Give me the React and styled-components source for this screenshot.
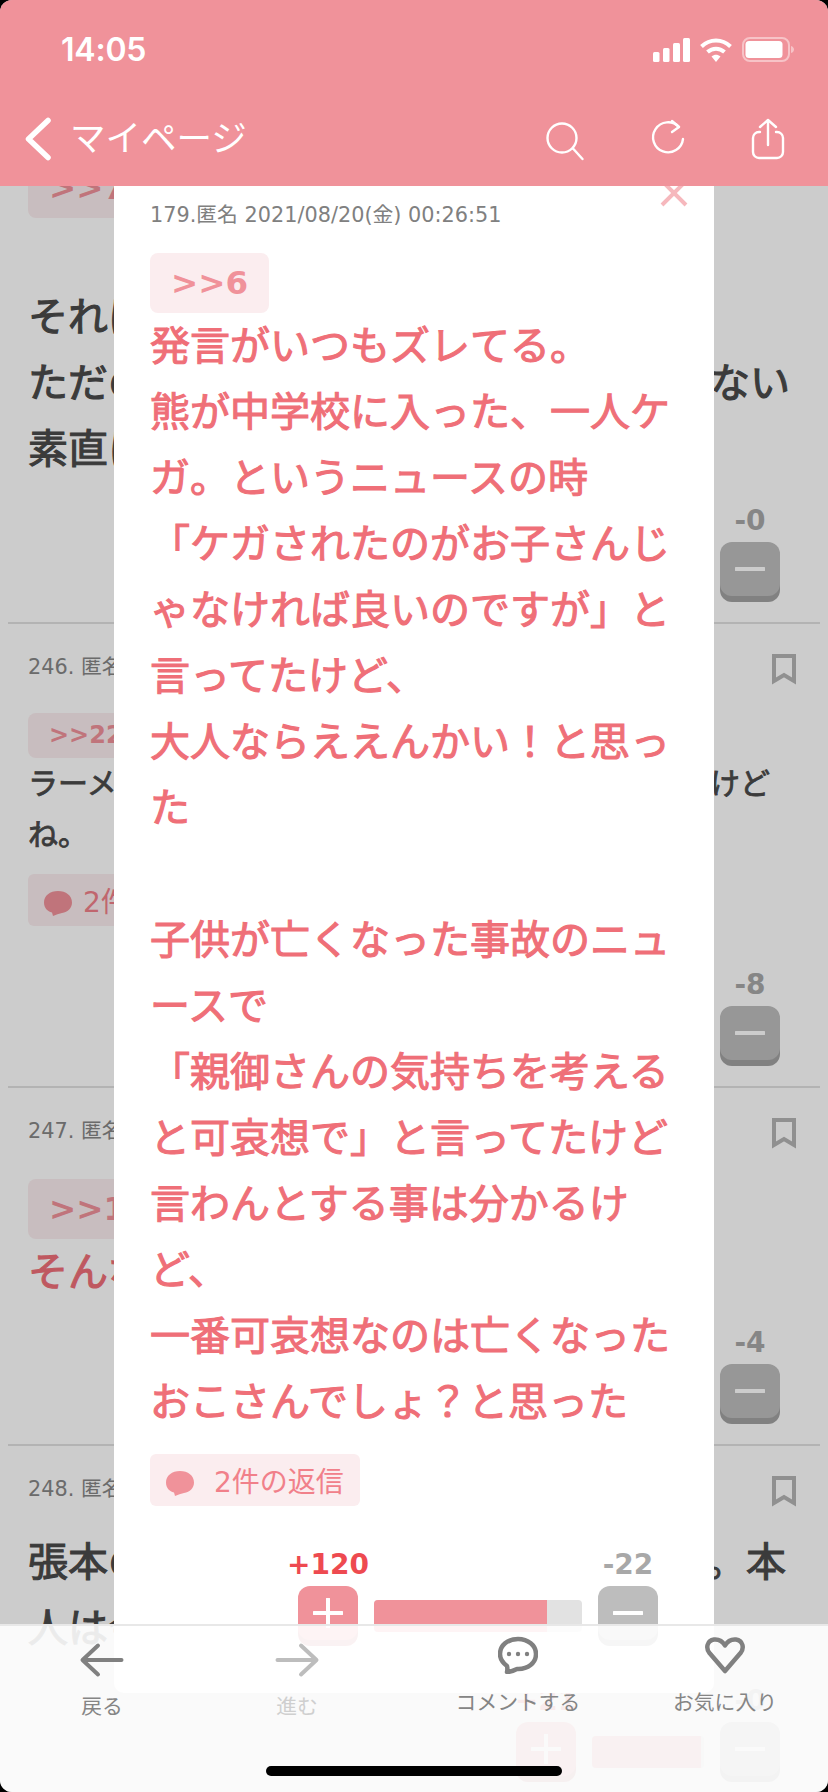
import React from "react";
import styled, { createGlobalStyle } from "styled-components";

const FONT = `"DejaVu Sans", "Noto Sans CJK JP", sans-serif`;
const PINK = "#f0929a";
const BODY_PINK = "#ef6f78";

const Global = createGlobalStyle`
  html, body { margin: 0; padding: 0; background: #000; }
  #root { width: 828px; height: 1792px; }
`;

const Frame = styled.div`
  position: relative;
  width: 828px;
  height: 1792px;
  overflow: hidden;
  border-radius: 12px;
  background: #fff;
  display: flex;
  flex-direction: column;
  font-family: ${FONT};
`;

const Header = styled.header`
  position: relative;
  z-index: 3;
  flex: none;
  height: 186px;
  background: ${PINK};
  color: #fff;
  display: flex;
  flex-direction: column;
`;

const StatusBar = styled.div`
  height: 92px;
  padding: 7px 34px 0 61px;
  box-sizing: border-box;
  display: flex;
  align-items: center;
  justify-content: space-between;
`;

const Time = styled.span`
  font-family: Inter, sans-serif;
  font-weight: 600;
  font-size: 32px;
  letter-spacing: -0.2px;
`;

const StatusIcons = styled.svg`
  display: block;
  width: 141px;
  height: 26px;
`;

const NavBar = styled.nav`
  height: 94px;
  display: flex;
  align-items: center;
  padding: 0 40px 0 24px;
`;

const BackLink = styled.div`
  display: flex;
  align-items: center;
  gap: 16px;
  flex: 1;
  font-size: 35.5px;
  line-height: 44px;
  font-weight: 400;
`;

const NavIcons = styled.div`
  display: flex;
  gap: 61px;
`;

const NavIcon = styled.svg`
  display: block;
  width: 40px;
  height: 44px;
  fill: none;
  stroke: #fff;
  stroke-width: 2.4;
  stroke-linecap: round;
  stroke-linejoin: round;
`;

const BackChevron = styled(NavIcon)`
  width: 30px;
  stroke-width: 5.5;
`;

const List = styled.main`
  flex: 1;
  min-height: 0;
  overflow: hidden;
  color: #4a4a4a;
`;

const Row = styled.article`
  margin: ${(p) => (p.$first ? "-28px" : "0")} 8px 0;
  padding: ${(p) => (p.$first ? "0" : "29px")} 24px 20px 20px;
  border-top: ${(p) => (p.$first ? "none" : "2px solid #e0e0e0")};
`;

const RowHead = styled.div`
  display: flex;
  justify-content: space-between;
  height: 32px;
  margin-bottom: ${(p) => p.$gap}px;
`;

const Meta = styled.div`
  font-size: 20.8px;
  line-height: 28px;
  color: #868686;
  white-space: nowrap;
`;

const Bookmark = styled.svg`
  display: block;
  width: 24px;
  height: 32px;
  fill: none;
  stroke: #b4b4b4;
  stroke-width: 4;
`;

const Tag = styled.div`
  width: fit-content;
  box-sizing: border-box;
  height: ${(p) => (p.$small ? 45 : 60)}px;
  line-height: ${(p) => (p.$small ? 45 : 61)}px;
  padding: 0 21px;
  border-radius: 8px;
  background: #fbedef;
  color: ${PINK};
  font-weight: 700;
  font-size: ${(p) => (p.$small ? 24 : 32.5)}px;
  white-space: nowrap;
`;

const TextLine = styled.div`
  display: flex;
  justify-content: space-between;
  box-sizing: border-box;
  min-height: ${(p) => (p.$small ? 51 : 66)}px;
  padding-right: ${(p) => p.$right || 0}px;
  font-size: ${(p) => (p.$small ? 30 : 40)}px;
  line-height: ${(p) => (p.$small ? 51 : 66)}px;
  font-weight: 400;
  -webkit-text-stroke: ${(p) => (p.$small ? 0.8 : 1.1)}px currentColor;
  white-space: nowrap;
  color: ${(p) => p.$color || "inherit"};
`;

const ReplyChip = styled.div`
  display: flex;
  align-items: center;
  gap: ${(p) => p.$gap}px;
  width: 210px;
  height: 52px;
  box-sizing: border-box;
  padding: 5px 0 0 16px;
  margin-top: ${(p) => p.$top}px;
  border-radius: 6px;
  background: #fbedef;
  color: #f1808a;
  font-size: 28px;
  line-height: 47px;
  white-space: nowrap;
`;

const ReplyBubble = styled.svg`
  display: block;
  flex: none;
  width: 28px;
  height: 26px;
  fill: ${PINK};
`;

const VoteGrid = styled.div`
  display: grid;
  width: fit-content;
  grid-template-columns: 60px ${(p) => p.$bar}px 60px;
  column-gap: 16px;
  row-gap: 3px;
  margin: ${(p) => p.$top}px ${(p) => p.$right}px 0 auto;
`;

const VoteCount = styled.div`
  grid-row: 1;
  grid-column: ${(p) => (p.$up ? 1 : 3)};
  justify-self: center;
  font-size: 28px;
  height: 40px;
  line-height: 44px;
  font-weight: 700;
  white-space: nowrap;
  color: ${(p) => (p.$up ? "#ee4a50" : "#a8a8a8")};
`;

const VoteButton = styled.div`
  grid-row: 2;
  width: 60px;
  height: 60px;
  box-sizing: border-box;
  padding-bottom: 6px;
  border-radius: 12px;
  display: flex;
  align-items: center;
  justify-content: center;
  background: ${(p) => (p.$up ? PINK : "#bdbdbd")};
  box-shadow: inset 0 -6px 0 rgba(0, 0, 0, 0.14);
`;

const VoteGlyph = styled.svg`
  display: block;
  width: 30px;
  height: 30px;
  stroke: #fff;
  stroke-width: 4;
  stroke-linecap: round;
`;

const VoteTrack = styled.div`
  grid-row: 2;
  height: 32px;
  margin-top: 14px;
  border-radius: 4px;
  overflow: hidden;
  background: #e2e2e2;
`;

const VoteFill = styled.div`
  height: 100%;
  background: ${PINK};
`;

const Dim = styled.div`
  position: absolute;
  inset: 0;
  z-index: 1;
  background: rgba(0, 0, 0, 0.2);
`;

const Modal = styled.section`
  position: absolute;
  z-index: 2;
  top: 186px;
  left: 114px;
  width: 600px;
  height: 1507px;
  box-sizing: border-box;
  padding: 15px 36px 0;
  overflow: hidden;
  border-radius: 0 0 10px 10px;
  background: #fff;
`;

const CloseIcon = styled.svg`
  position: absolute;
  top: -7px;
  right: 26px;
  width: 28px;
  height: 28px;
  stroke: #f6b8bd;
  stroke-width: 4;
`;

const ModalMeta = styled(Meta)`
  margin-bottom: 24px;
  color: #808080;
`;

const BottomBar = styled.footer`
  position: absolute;
  z-index: 4;
  left: 0;
  right: 0;
  bottom: 0;
  height: 168px;
  box-sizing: border-box;
  border-top: 2px solid #e8e8e8;
  background: rgba(255, 255, 255, 0.9);
  display: grid;
  grid-template-columns: 204px 186px 256px 158px;
`;

const BarItem = styled.div`
  display: flex;
  flex-direction: column;
  align-items: center;
  padding-top: ${(p) => (p.$raised ? 10 : 18)}px;
  gap: ${(p) => (p.$raised ? 15 : 17)}px;
  font-size: 20.8px;
  line-height: 28px;
  white-space: nowrap;
  color: ${(p) => (p.$muted ? "#cfcfcf" : "#858585")};
`;

const BarArrow = styled.svg`
  display: block;
  width: 44px;
  height: 32px;
  overflow: visible;
  fill: none;
  stroke: ${(p) => (p.$muted ? "#bdbdbd" : "#808080")};
  stroke-width: 4;
  stroke-linecap: round;
  stroke-linejoin: round;
`;

const BarGlyph = styled.svg`
  display: block;
  width: 40px;
  height: 38px;
  fill: none;
  stroke: #808080;
  stroke-width: 4.5;
  stroke-linejoin: round;
`;

const HomeIndicator = styled.div`
  position: absolute;
  z-index: 5;
  left: 266px;
  bottom: 16px;
  width: 296px;
  height: 10px;
  border-radius: 5px;
  background: #000;
`;

function Vote({ plus, minus, pct, bar, top, right }) {
  return (
    <VoteGrid $bar={bar} $top={top} $right={right}>
      <VoteCount $up>{plus}</VoteCount>
      <VoteCount>{minus}</VoteCount>
      <VoteButton $up>
        <VoteGlyph viewBox="0 0 30 30">
          <path d="M1 15H29M15 1V29" />
        </VoteGlyph>
      </VoteButton>
      <VoteTrack>
        <VoteFill style={{ width: `${pct}%` }} />
      </VoteTrack>
      <VoteButton>
        <VoteGlyph viewBox="0 0 30 30">
          <path d="M1 15H29" />
        </VoteGlyph>
      </VoteButton>
    </VoteGrid>
  );
}

function BookmarkIcon() {
  return (
    <Bookmark viewBox="0 0 24 32">
      <path d="M2 3H22V28L12 22L2 28Z" />
    </Bookmark>
  );
}

function Bubble() {
  return (
    <ReplyBubble viewBox="0 0 28 26">
      <path d="M14 1C6 1 0 5.5 0 12.5C0 18 3.5 21.5 8 22.5L9 26C12 24.5 15 23.5 18 23C24 22 28 18 28 12.5C28 5.5 22 1 14 1Z" />
    </ReplyBubble>
  );
}

const modalLines = [
  "発言がいつもズレてる。",
  "熊が中学校に入った、一人ケ",
  "ガ。というニュースの時",
  "「ケガされたのがお子さんじ",
  "ゃなければ良いのですが」と",
  "言ってたけど、",
  "大人ならええんかい！と思っ",
  "た",
  "",
  "子供が亡くなった事故のニュ",
  "ースで",
  "「親御さんの気持ちを考える",
  "と可哀想で」と言ってたけど",
  "言わんとする事は分かるけ",
  "ど、",
  "一番可哀想なのは亡くなった",
  "おこさんでしょ？と思った",
];

export default function App() {
  return (
    <Frame lang="ja">
      <Global />
      <Header>
        <StatusBar>
          <Time>14:05</Time>
          <StatusIcons viewBox="0 0 141 26">
            <g fill="#fff">
              <rect x="0" y="15" width="6.5" height="10" rx="1.5" />
              <rect x="10" y="11" width="6.5" height="14" rx="1.5" />
              <rect x="20" y="6" width="7" height="19" rx="1.5" />
              <rect x="30" y="1" width="7" height="24" rx="1.5" />
            </g>
            <g fill="none" stroke="#fff" strokeWidth="4">
              <path d="M48.5 9.5C57 1.5 69 1.5 77.5 9.5" />
              <path d="M54.5 15C59.5 10.5 66.5 10.5 71.5 15" />
            </g>
            <path d="M58.5 19.5C61.5 17 64.5 17 67.5 19.5L63 25Z" fill="#fff" />
            <rect x="90" y="1" width="46" height="23" rx="7" fill="none" stroke="#fff" strokeOpacity="0.45" strokeWidth="2" />
            <rect x="92.5" y="4" width="37" height="17" rx="3.5" fill="#fff" />
            <path d="M138 9C140 9.5 141 11 141 12.5C141 14 140 15.5 138 16Z" fill="#fff" fillOpacity="0.45" />
          </StatusIcons>
        </StatusBar>
        <NavBar>
          <BackLink>
            <BackChevron viewBox="0 0 30 44">
              <path d="M24 3.5L4.5 22L24 40.5" />
            </BackChevron>
            マイページ
          </BackLink>
          <NavIcons>
            <NavIcon viewBox="0 0 40 44">
              <circle cx="16" cy="21" r="14.5" />
              <path d="M27 31.5L36.5 42" />
            </NavIcon>
            <NavIcon viewBox="0 0 40 44">
              <path d="M36 22A15 15 0 1 1 32 10" />
              <path d="M25 4L32 10L25 15" />
            </NavIcon>
            <NavIcon viewBox="0 0 40 44">
              <path d="M12 15H11A6 6 0 0 0 5 21V35A6 6 0 0 0 11 41H29A6 6 0 0 0 35 35V21A6 6 0 0 0 29 15H28" />
              <path d="M20 28V3M12 10L20 3L28 10" />
            </NavIcon>
          </NavIcons>
        </NavBar>
      </Header>

      <List>
        <Row $first>
          <Tag>&gt;&gt;7</Tag>
          <TextLine />
          <TextLine>それは</TextLine>
          <TextLine $right={6}>
            <span>ただの</span>
            <span>ない</span>
          </TextLine>
          <TextLine>素直に</TextLine>
          <Vote plus="+5" minus="-0" pct={100} bar={112} top={17} right={16} />
        </Row>
        <Row>
          <RowHead $gap={28}>
            <Meta>246. 匿名</Meta>
            <BookmarkIcon />
          </RowHead>
          <Tag $small>&gt;&gt;22</Tag>
          <TextLine $small $right={26}>
            <span>ラーメ</span>
            <span>けど</span>
          </TextLine>
          <TextLine $small>ね。</TextLine>
          <ReplyChip $gap={11} $top={14}>
            <Bubble />
            2件の返信
          </ReplyChip>
          <Vote plus="+30" minus="-8" pct={79} bar={112} top={37} right={16} />
        </Row>
        <Row>
          <RowHead $gap={30}>
            <Meta>247. 匿名</Meta>
            <BookmarkIcon />
          </RowHead>
          <Tag>&gt;&gt;1</Tag>
          <TextLine $color={BODY_PINK}>そんな</TextLine>
          <Vote plus="+12" minus="-4" pct={75} bar={112} top={16} right={16} />
        </Row>
        <Row>
          <RowHead $gap={22}>
            <Meta>248. 匿名</Meta>
            <BookmarkIcon />
          </RowHead>
          <TextLine $right={10}>
            <span>張本の</span>
            <span>。本</span>
          </TextLine>
          <TextLine>人は今</TextLine>
          <Vote plus="+21" minus="-0" pct={97} bar={112} top={18} right={16} />
        </Row>
      </List>

      <Dim />

      <Modal>
        <CloseIcon viewBox="0 0 28 28">
          <path d="M2 2L26 26M26 2L2 26" />
        </CloseIcon>
        <ModalMeta>179.匿名 2021/08/20(金) 00:26:51</ModalMeta>
        <Tag>&gt;&gt;6</Tag>
        {modalLines.map((line, i) => (
          <TextLine key={i} $color={BODY_PINK}>
            {line}
          </TextLine>
        ))}
        <ReplyChip $gap={20} $top={19}>
          <Bubble />
          2件の返信
        </ReplyChip>
        <Vote plus="+120" minus="-22" pct={83.2} bar={208} top={37} right={20} />
      </Modal>

      <BottomBar>
        <BarItem>
          <BarArrow viewBox="0 0 44 32">
            <path d="M41.5 16H3M18 1.5L2.5 16L18 30.5" />
          </BarArrow>
          戻る
        </BarItem>
        <BarItem $muted>
          <BarArrow viewBox="0 0 44 32" $muted>
            <path d="M2.5 16H41M26 1.5L41.5 16L26 30.5" />
          </BarArrow>
          進む
        </BarItem>
        <BarItem $raised>
          <BarGlyph viewBox="0 0 40 38">
            <path d="M20 3C9.5 3 2 9.5 2 18C2 23.5 5 27 9 30C9.5 32 9.5 34 9 36C13 36 16 34.5 19 33C30 33.5 38 27 38 18C38 9.5 30 3 20 3Z" />
            <g fill="#808080" stroke="none">
              <circle cx="11" cy="18" r="2.2" />
              <circle cx="20" cy="18" r="2.2" />
              <circle cx="29" cy="18" r="2.2" />
            </g>
          </BarGlyph>
          コメントする
        </BarItem>
        <BarItem $raised>
          <BarGlyph viewBox="0 0 40 38">
            <path d="M20 35L4.5 17C0.5 12 2 4.5 9 3.5C14 3 18 6 20 9.5C22 6 26 3 31 3.5C38 4.5 39.5 12 35.5 17Z" />
          </BarGlyph>
          お気に入り
        </BarItem>
      </BottomBar>
      <HomeIndicator />
    </Frame>
  );
}
